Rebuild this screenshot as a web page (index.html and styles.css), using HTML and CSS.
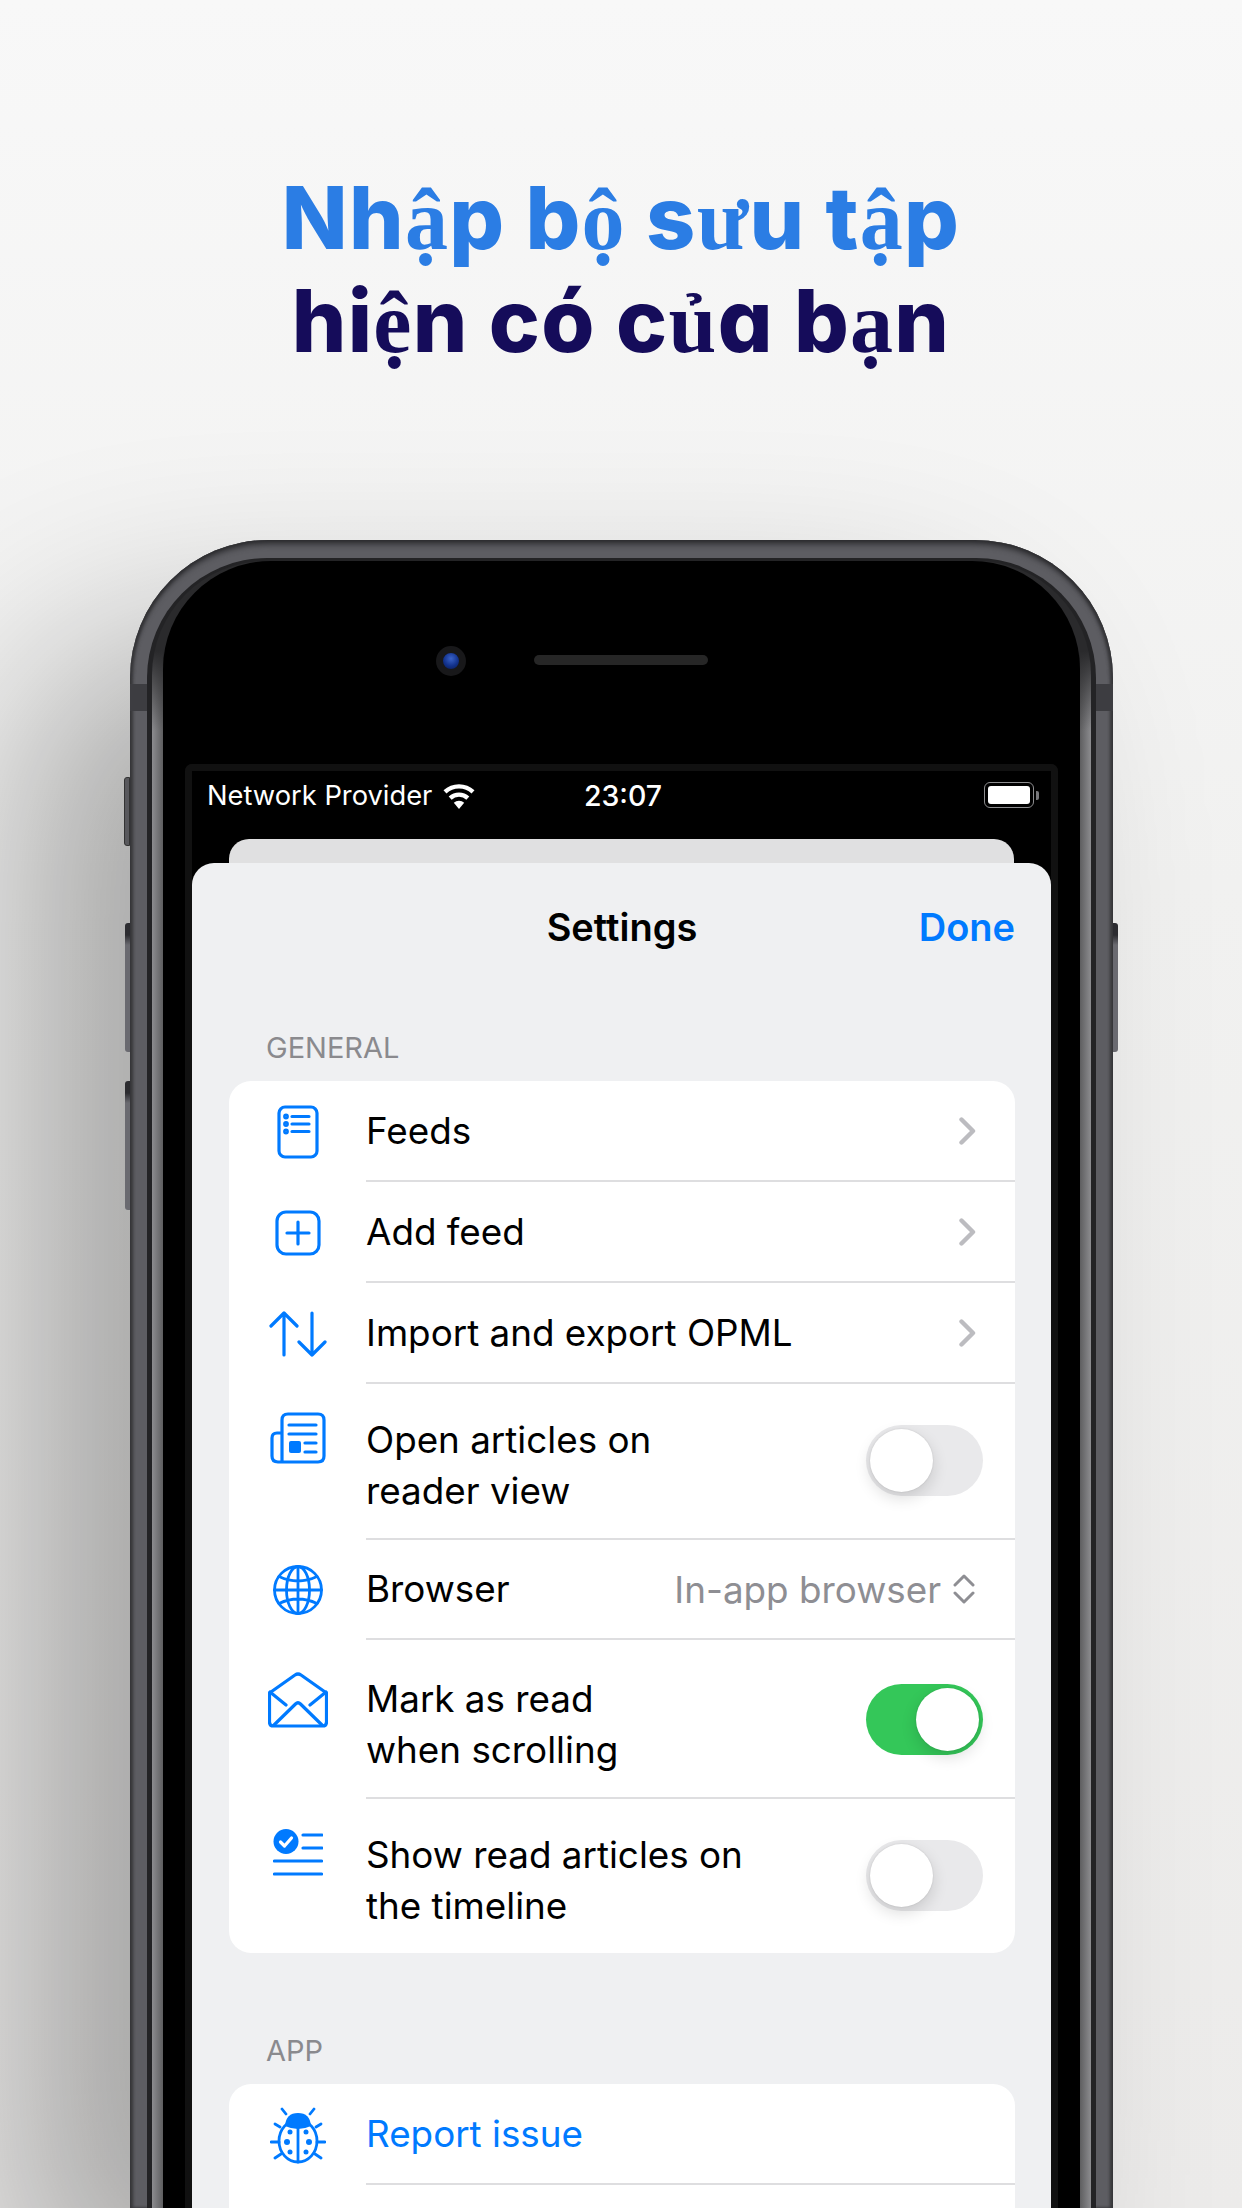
FILE: index.html
```html
<!DOCTYPE html>
<html lang="vi">
<head>
    <meta charset="UTF-8">
    <meta name="viewport" content="width=device-width, initial-scale=1.0">
    <title>Settings</title>
    <link rel="stylesheet" href="styles.css">
</head>
<body>
    <h1 class="headline">
        <span class="headline-blue">Nh<span class="fallback">ậ</span>p b<span class="fallback">ộ</span> s<span class="fallback">ư</span>u t<span class="fallback">ậ</span>p</span>
        <span class="headline-navy">hi<span class="fallback">ệ</span>n có c<span class="fallback">ủ</span>a b<span class="fallback">ạ</span>n</span>
    </h1>

    <div class="phone">
        <div class="button button-mute"></div>
        <div class="button button-up"></div>
        <div class="button button-down"></div>
        <div class="button button-power"></div>
        <div class="antenna antenna-left"></div>
        <div class="antenna antenna-right"></div>

        <div class="rim">
            <div class="glass">
                <div class="bezel">
                    <div class="sensors">
                        <div class="camera"></div>
                        <div class="speaker"></div>
                    </div>

                    <div class="screen">
                        <div class="status-bar">
                            <div class="status-left">
                                <span>Network Provider</span>
                                <svg width="36" height="27" viewBox="0 0 34 26">
                                    <path d="M17 26l-5-6a7.5 7.5 0 0 1 10 0z" fill="#fff"/>
                                    <path d="M8.5 15.5a12.5 12.5 0 0 1 17 0M3.500 9.500a20 20 0 0 1 27 0" fill="none" stroke="#fff" stroke-width="4.200"/>
                                </svg>
                            </div>
                            <div class="status-time">23:07</div>
                            <div class="status-right">
                                <div class="battery"><div class="battery-fill"></div></div>
                                <div class="battery-nub"></div>
                            </div>
                        </div>

                        <div class="sheet-back"></div>

                        <div class="sheet">
                            <div class="nav">
                                <div></div>
                                <div class="nav-title">Settings</div>
                                <div class="nav-done">Done</div>
                            </div>

                            <div class="section-label">GENERAL</div>
                            <div class="card">
                                <div class="row">
                                    <div class="row-icon">
                                        <svg width="42" height="54" viewBox="0 0 42 54" class="icon">
                                            <rect x="2" y="2" width="38" height="50" rx="6"/>
                                            <path d="M15 11.500h17M15 19h17M15 26.500h17"/>
                                            <circle cx="9" cy="11.500" r="1.300"/>
                                            <circle cx="9" cy="19" r="1.300"/>
                                            <circle cx="9" cy="26.500" r="1.300"/>
                                        </svg>
                                    </div>
                                    <div class="row-body">
                                        <div class="row-label">Feeds</div>
                                        <svg class="chevron" width="18" height="28" viewBox="0 0 18 28"><path d="M2.500 2.500L14 14 2.500 25.500"/></svg>
                                    </div>
                                </div>
                                <div class="row">
                                    <div class="row-icon">
                                        <svg width="46" height="46" viewBox="0 0 46 46" class="icon">
                                            <rect x="2" y="2" width="42" height="42" rx="9"/>
                                            <path d="M23 12v22M12 23h22"/>
                                        </svg>
                                    </div>
                                    <div class="row-body">
                                        <div class="row-label">Add feed</div>
                                        <svg class="chevron" width="18" height="28" viewBox="0 0 18 28"><path d="M2.500 2.500L14 14 2.500 25.500"/></svg>
                                    </div>
                                </div>
                                <div class="row">
                                    <div class="row-icon">
                                        <svg width="58" height="46" viewBox="0 0 58 46" class="icon">
                                            <path d="M15 44V2M2 15L15 2l13 13M43 2v42M30 31l13 13 13-13"/>
                                        </svg>
                                    </div>
                                    <div class="row-body">
                                        <div class="row-label">Import and export OPML</div>
                                        <svg class="chevron" width="18" height="28" viewBox="0 0 18 28"><path d="M2.500 2.500L14 14 2.500 25.500"/></svg>
                                    </div>
                                </div>
                                <div class="row row-tall row-paper">
                                    <div class="row-icon">
                                        <svg width="56" height="52" viewBox="0 0 56 52" class="icon">
                                            <path d="M12 50V8q0-6 6-6h30q6 0 6 6v36q0 6-6 6H8q-6 0-6-6V26q0-5 5-5h5"/>
                                            <path d="M19 13h27M19 22h27M35 31h11M35 40h11"/>
                                            <rect x="19" y="29" width="12" height="12" rx="2" class="icon-solid"/>
                                        </svg>
                                    </div>
                                    <div class="row-body">
                                        <div class="row-label">Open articles on<br>reader view</div>
                                        <div class="switch"><div class="knob"></div></div>
                                    </div>
                                </div>
                                <div class="row row-compact">
                                    <div class="row-icon">
                                        <svg width="50" height="50" viewBox="0 0 50 50" class="icon icon-thin">
                                            <circle cx="25" cy="25" r="23.500"/>
                                            <ellipse cx="25" cy="25" rx="11.500" ry="23.500"/>
                                            <path d="M25 1.500v47M1.500 25h47M6 11.500q19 9 38 0M6 38.500q19-9 38 0"/>
                                        </svg>
                                    </div>
                                    <div class="row-body">
                                        <div class="row-label">Browser</div>
                                        <div class="row-value">In-app browser</div>
                                        <svg class="updown" width="22" height="30" viewBox="0 0 22 30"><path d="M2 11l9-9 9 9M2 19l9 9 9-9"/></svg>
                                    </div>
                                </div>
                                <div class="row row-tall row-mail">
                                    <div class="row-icon">
                                        <svg width="60" height="56" viewBox="0 0 60 56" class="icon">
                                            <path d="M1.500 21L27 3q3-2 6 0l25.500 18v29q0 4-4 4H5.500q-4 0-4-4z"/>
                                            <path d="M2 20l16 13M58 20L42 33M6 53l21.500-21q2.500-2.500 5 0L54 53"/>
                                        </svg>
                                    </div>
                                    <div class="row-body">
                                        <div class="row-label">Mark as read<br>when scrolling</div>
                                        <div class="switch switch-on"><div class="knob"></div></div>
                                    </div>
                                </div>
                                <div class="row row-tall">
                                    <div class="row-icon">
                                        <svg width="50" height="47" viewBox="0 0 50 47" class="icon">
                                            <circle cx="13" cy="12.500" r="12.500" class="icon-solid"/>
                                            <path d="M7.500 13l4 4 7-8" class="icon-check"/>
                                            <path d="M30 6h19M30 19h19M1.500 32h47M1.500 45h47"/>
                                        </svg>
                                    </div>
                                    <div class="row-body">
                                        <div class="row-label">Show read articles on<br>the timeline</div>
                                        <div class="switch"><div class="knob"></div></div>
                                    </div>
                                </div>
                            </div>

                            <div class="section-label section-label-app">APP</div>
                            <div class="card">
                                <div class="row">
                                    <div class="row-icon">
                                        <svg width="56" height="60" viewBox="0 0 56 60" class="icon icon-thin">
                                            <ellipse cx="28" cy="36" rx="19" ry="21"/>
                                            <path d="M15 21q1-13 13-13t13 13q-13 6-26 0z" class="icon-solid"/>
                                            <path d="M28 22v35M16 9l-4-5M40 9l4-5M10 22l-5-3M46 22l5-3M9 37H1M47 37h8M11 49l-6 4M45 49l6 4"/>
                                            <circle cx="20" cy="27" r="2.500" class="icon-solid"/>
                                            <circle cx="36" cy="27" r="2.500" class="icon-solid"/>
                                            <circle cx="17" cy="37" r="3" class="icon-solid"/>
                                            <circle cx="39" cy="37" r="3" class="icon-solid"/>
                                            <circle cx="20" cy="47" r="2.500" class="icon-solid"/>
                                            <circle cx="36" cy="47" r="2.500" class="icon-solid"/>
                                        </svg>
                                    </div>
                                    <div class="row-body">
                                        <div class="row-label row-label-link">Report issue</div>
                                    </div>
                                </div>
                                <div class="row">
                                    <div class="row-icon"></div>
                                    <div class="row-body"></div>
                                </div>
                            </div>
                        </div>
                    </div>
                </div>
            </div>
        </div>
    </div>
</body>
</html>
```
FILE: styles.css
```css
html, body {
    margin: 0;
    padding: 0;
}
body {
    width: 1242px;
    height: 2208px;
    overflow: hidden;
    background: linear-gradient(180deg, #f8f8f8 0%, #f1f1f0 40%, #ecebea 100%);
    font-family: Inter, "Liberation Sans", sans-serif;
}

/* headline */
.headline {
    margin: 0;
    padding-top: 168px;
    height: 540px;
    box-sizing: border-box;
    text-align: center;
    font-size: 86px;
    line-height: 101px;
    font-weight: 800;
    letter-spacing: 1.300px;
    font-feature-settings: "cv11";
}
.headline span {
    display: block;
}
.headline .fallback {
    display: inline;
    font-family: "Liberation Serif", serif;
    font-weight: 700;
}
.headline-blue {
    color: #2b7de4;
}
.headline-navy {
    color: #150c5a;
}

/* phone body */
.phone {
    position: relative;
    width: 983px;
    height: 1668px;
    margin-left: 130px;
    box-sizing: border-box;
    padding: 18px 17px 0;
    border-radius: 138px 138px 0 0;
    background: #5d5d62;
    box-shadow: -110px 100px 200px rgba(0, 0, 0, 0.3), inset 0 6px 6px -2px #2b2b2e, inset 3px 0 3px #3a3a3d, inset -3px 0 3px #3a3a3d;
}
.button {
    position: absolute;
    left: -5px;
    width: 5px;
    height: 129px;
    border-radius: 3px 0 0 3px;
    background: linear-gradient(180deg, #2c2c30 0, #2c2c30 12px, #6a6a70 22px, #6a6a70 100%);
}
.button-mute {
    top: 237px;
    left: -6px;
    width: 6px;
    height: 69px;
    background: #58585c;
    border: 1px solid #333;
    box-sizing: border-box;
}
.button-up {
    top: 383px;
}
.button-down {
    top: 541px;
}
.button-power {
    top: 383px;
    left: 983px;
    border-radius: 0 3px 3px 0;
}
.antenna {
    position: absolute;
    top: 144px;
    width: 17px;
    height: 27px;
    background: #3d3d41;
}
.antenna-left {
    left: 0;
}
.antenna-right {
    right: 0;
}
.rim {
    height: 100%;
    box-sizing: border-box;
    padding: 3px 5px 0;
    border-radius: 120px 120px 0 0;
    background: #232325;
}
.glass {
    height: 100%;
    box-sizing: border-box;
    padding: 0 11px;
    border-radius: 114px 114px 0 0;
    background:
        linear-gradient(180deg, #2a2a2c 0, #2a2a2c 90px, rgba(42, 42, 44, 0) 170px),
        linear-gradient(90deg, #8c8c8f 0, #5e5e60 11px, #000 11px, #000 calc(100% - 11px), #5e5e60 calc(100% - 11px), #8c8c8f 100%);
}
.bezel {
    height: 100%;
    border-radius: 108px 108px 0 0;
    background: #000;
}

/* camera and speaker */
.sensors {
    display: flex;
    align-items: center;
    gap: 68px;
    height: 203px;
    box-sizing: border-box;
    padding: 0 0 3px 273px;
}
.camera {
    width: 16px;
    height: 16px;
    border: 7px solid #18181a;
    border-radius: 50%;
    background: radial-gradient(circle at 50% 35%, #3a62c8 0, #12328c 55%, #0a1a50 100%);
}
.speaker {
    width: 174px;
    height: 10px;
    margin-top: -3px;
    border-radius: 5px;
    background: #262626;
}

/* screen */
.screen {
    height: 1444px;
    box-sizing: border-box;
    margin: 0 22px;
    border: 7px solid #111;
    border-bottom: 0;
    border-radius: 7px 7px 0 0;
    background: #000;
    overflow: hidden;
}
.status-bar {
    display: grid;
    grid-template-columns: 1fr auto 1fr;
    align-items: center;
    height: 48px;
    padding: 0 12px 0 15px;
    color: #fff;
    font-size: 27.300px;
}
.status-left {
    display: flex;
    align-items: center;
    gap: 9px;
}
.status-time {
    font-size: 28.500px;
    font-weight: 500;
}
.status-right {
    display: flex;
    align-items: center;
    justify-content: flex-end;
    gap: 2px;
}
.battery {
    width: 50px;
    height: 26px;
    box-sizing: border-box;
    padding: 3px;
    border: 1.500px solid #8d8d8f;
    border-radius: 6px;
}
.battery-fill {
    height: 100%;
    border-radius: 3px;
    background: #fff;
}
.battery-nub {
    width: 3px;
    height: 9px;
    border-radius: 0 2px 2px 0;
    background: #77777a;
}
.sheet-back {
    height: 24px;
    margin: 20px 37px 0;
    border-radius: 20px 20px 0 0;
    background: #e0e0e1;
}
.sheet {
    height: 1345px;
    box-sizing: border-box;
    padding: 0 36px 0 37px;
    border-radius: 22px 22px 0 0;
    background: #eff0f2;
    overflow: hidden;
}

/* nav */
.nav {
    display: grid;
    grid-template-columns: 1fr auto 1fr;
    align-items: center;
    height: 128px;
    font-size: 38px;
    font-weight: 600;
    color: #000;
}
.nav-done {
    text-align: right;
    color: #007aff;
}

/* list */
.section-label {
    margin-top: 40px;
    padding: 0 37px 16px;
    font-size: 29px;
    line-height: 34px;
    color: #8a8a8e;
}
.section-label-app {
    margin-top: 81px;
}
.card {
    border-radius: 22px;
    background: #fff;
    overflow: hidden;
}
.row {
    display: flex;
    font-size: 36.800px;
    color: #000;
}
.row-icon {
    flex: 0 0 137px;
    display: flex;
    align-items: center;
    justify-content: center;
}
.row-body {
    flex: 1;
    display: flex;
    align-items: center;
    min-height: 99px;
    padding: 0 32px 0 0;
    border-bottom: 2px solid #dedee0;
}
.row:last-child .row-body {
    border-bottom: 0;
}
.row-compact .row-body {
    min-height: 98px;
}
.row-label {
    flex: 1;
    margin-top: -1px;
    line-height: 51px;
}
.row-label-link {
    color: #007aff;
}
.row-value {
    color: #8e8e93;
}
.row-tall .row-label {
    margin-top: 0;
    padding-top: 1px;
}
.row-tall .row-icon {
    align-items: flex-start;
    padding-top: 30px;
}
.row-tall .row-body {
    padding-top: 29px;
    padding-bottom: 22px;
}
.row-paper .row-icon {
    padding-top: 28px;
}
.row-mail .row-icon {
    padding-top: 32px;
}
.row-mail .row-body {
    padding-top: 32px;
    padding-bottom: 22px;
}

/* icons */
.icon {
    fill: none;
    stroke: #007aff;
    stroke-width: 3.200;
    stroke-linecap: round;
    stroke-linejoin: round;
}
.icon-thin {
    stroke-width: 2.800;
}
.icon .icon-solid {
    fill: #007aff;
    stroke: none;
}
.icon .icon-check {
    stroke: #fff;
}
.chevron {
    margin-right: 6px;
    fill: none;
    stroke: #bcbcc0;
    stroke-width: 4.400;
    stroke-linecap: round;
    stroke-linejoin: round;
}
.updown {
    margin: 0 8px 0 12px;
    fill: none;
    stroke: #8e8e93;
    stroke-width: 3;
    stroke-linecap: round;
    stroke-linejoin: round;
}

/* switches */
.switch {
    flex: 0 0 auto;
    display: flex;
    width: 117px;
    height: 71px;
    box-sizing: border-box;
    padding: 4px;
    margin-top: -8px;
    border-radius: 36px;
    background: #e9e9eb;
}
.switch-on {
    justify-content: flex-end;
    background: #34c759;
}
.knob {
    width: 63px;
    height: 63px;
    border-radius: 50%;
    background: #fff;
    box-shadow: 0 6px 16px rgba(0, 0, 0, 0.14), 0 0 2px rgba(0, 0, 0, 0.12);
}
```
